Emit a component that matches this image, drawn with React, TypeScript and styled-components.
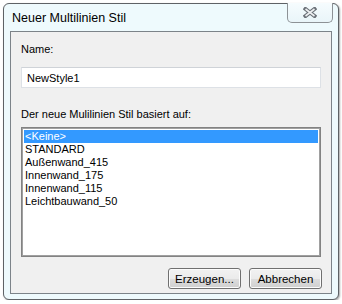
import styled, { createGlobalStyle } from "styled-components";

const GlobalStyle = createGlobalStyle`
  html, body {
    margin: 0;
    padding: 0;
    background: #ffffff;
  }
  body {
    padding: 3px 0 0 3px;
    font-family: "Liberation Sans", Arial, sans-serif;
  }
`;

const Window = styled.div`
  position: relative;
  width: 334px;
  height: 295px;
  border: 1px solid #5e6266;
  border-radius: 6px;
  background: #eefafd;
  display: flex;
  flex-direction: column;
  box-shadow: 1px 1px 2px rgba(0, 0, 0, 0.35);
`;

const TitleBar = styled.div`
  height: 27px;
  display: flex;
  align-items: center;
  padding: 1px 0 0 8px;
  box-sizing: border-box;
  font-family: "Liberation Sans", Arial, sans-serif;
  font-size: 12.5px;
  color: #000;
`;

const CloseButton = styled.div`
  position: absolute;
  top: -1px;
  right: 5px;
  width: 44px;
  height: 19px;
  border: 1px solid #8d9296;
  border-top: none;
  border-radius: 0 0 5px 5px;
  background: linear-gradient(#f6fcfe, #e9f5f9);
  display: flex;
  align-items: center;
  justify-content: center;
`;

const Client = styled.div`
  margin: 0 6px 5px 6px;
  flex: 1;
  border: 1px solid #7c8389;
  background: #f0f0f0;
  padding: 10px 9px 0 10px;
  display: flex;
  flex-direction: column;
  font-family: "Liberation Sans", Arial, sans-serif;
  font-size: 11px;
  color: #000;
`;

const Label = styled.div<{ gap: number }>`
  height: 13px;
  line-height: 13px;
  margin-top: ${(p) => p.gap}px;
`;

const TextBox = styled.div`
  margin-top: 11px;
  width: 300px;
  height: 21px;
  box-sizing: border-box;
  border: 1px solid #dde1e6;
  border-top-color: #cfd3d8;
  background: #fff;
  padding-left: 5px;
  display: flex;
  align-items: center;
`;

const ListBox = styled.div`
  margin-top: 6px;
  width: 300px;
  height: 130px;
  box-sizing: border-box;
  border: 1px solid #828282;
  box-shadow: inset 0 0 0 1px #a0a0a0;
  background: #fff;
  padding: 2px;
`;

const ListItem = styled.div<{ selected?: boolean }>`
  height: 13px;
  line-height: 13px;
  padding-left: 1px;
  background: ${(p) => (p.selected ? "#3399ff" : "transparent")};
  color: ${(p) => (p.selected ? "#fff" : "#000")};
`;

const ButtonRow = styled.div`
  margin-top: 11px;
  width: 301px;
  display: flex;
  justify-content: flex-end;
  gap: 8px;
`;

const Button = styled.div`
  width: 73px;
  height: 21px;
  box-sizing: border-box;
  border: 1px solid #707070;
  border-radius: 3px;
  background: linear-gradient(#f2f2f2 0%, #ebebeb 50%, #dddddd 51%, #cfcfcf 100%);
  box-shadow: inset 0 0 0 1px #fcfcfc;
  display: flex;
  align-items: center;
  justify-content: center;
  font-size: 11.5px;
`;

const items = [
  "<Keine>",
  "STANDARD",
  "Außenwand_415",
  "Innenwand_175",
  "Innenwand_115",
  "Leichtbauwand_50",
];

export default function App() {
  return (
    <>
      <GlobalStyle />
      <Window>
        <TitleBar>Neuer Multilinien Stil</TitleBar>
        <CloseButton>
          <svg width="14" height="11" viewBox="0 0 14 11">
            <path
              d="M2.5 2 L11.5 9 M11.5 2 L2.5 9"
              stroke="#6a7077"
              strokeWidth="4"
              strokeLinecap="square"
            />
            <path
              d="M2.5 2 L11.5 9 M11.5 2 L2.5 9"
              stroke="#eef0f2"
              strokeWidth="1.6"
            />
          </svg>
        </CloseButton>
        <Client>
          <Label gap={1}>Name:</Label>
          <TextBox>NewStyle1</TextBox>
          <Label gap={20}>Der neue Mulilinien Stil basiert auf:</Label>
          <ListBox>
            {items.map((it, i) => (
              <ListItem key={it} selected={i === 0}>
                {it}
              </ListItem>
            ))}
          </ListBox>
          <ButtonRow>
            <Button>Erzeugen...</Button>
            <Button>Abbrechen</Button>
          </ButtonRow>
        </Client>
      </Window>
    </>
  );
}
